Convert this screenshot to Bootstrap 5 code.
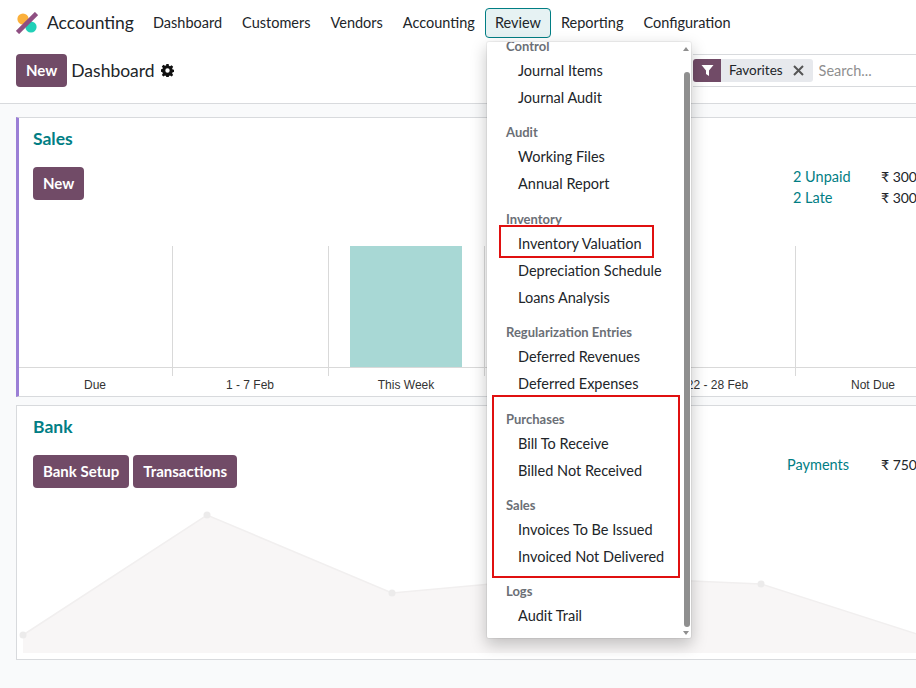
<!DOCTYPE html>
<html lang="en">
<head>
    <meta charset="UTF-8">
    <title>Accounting Dashboard</title>
    <link href="https://cdn.jsdelivr.net/npm/bootstrap@5.3.2/dist/css/bootstrap.min.css" rel="stylesheet">
    <style>
        html, body { height: 688px; overflow: hidden; }
        body { background: #f9fafb; font-family: Lato, "Noto Sans", sans-serif; font-size: 14.5px; color: #212529; position: relative; }
        .top-bar { height: 46px; background: #fff; padding-left: 16px; }
        .app-name { font-size: 17.5px; margin: 0 9px 0 9px; color: #212529; }
        .top-link { padding: 3px 9px; border: 1px solid transparent; border-radius: 4px; color: #212529; text-decoration: none; }
        .top-link.is-open { background: #e6f2f3; border-color: #017e84; }
        .ctrl-bar { height: 58px; background: #fff; border-bottom: 1px solid #d8dadd; padding: 8px 0 0 16px; }
        .odoo-btn { background: #714b67; color: #fff; font-weight: 700; font-size: 15px; border: 0; border-radius: 4px; padding: 0 10px; height: 33px; }
        .odoo-btn:hover { background: #714b67; color: #fff; }
        .crumb { font-size: 17.5px; margin-left: 4px; line-height: 34px; }
        .gear-icon { margin: 10px 0 0 6px; }
        .search-wrap { width: 223px; height: 33px; border-top: 1px solid #d8dadd; border-bottom: 1px solid #d8dadd; }
        .search-icon { width: 28px; height: 23px; background: #714b67; border-radius: 3px 0 0 3px; }
        .search-tag { height: 23px; background: #e7e9ed; padding: 0 9px 0 8px; border-radius: 0 3px 3px 0; font-size: 13.5px; gap: 10px; }
        .search-ph { color: #8f8f8f; margin-left: 6px; }
        .kanban-box { background: #fff; border: 1px solid #d8dadd; margin: 0 -2px 0 16px; }
        .sales-box { height: 280px; margin-top: 13px; border-left: 3px solid #9b7fd6; }
        .bank-box { height: 255px; margin-top: 8px; }
        .box-top { padding: 7px 0 0 14px; height: 128px; }
        .bank-box .box-top { padding-left: 16px; height: 100px; }
        .box-title { color: #017e84; font-size: 17.5px; font-weight: 700; line-height: 27px; margin-bottom: 15px; }
        .stat-col { width: 124px; padding-top: 41px; line-height: 21px; white-space: nowrap; }
        .bank-box .stat-col { width: 130px; }
        .stat-link { color: #017e84; width: 88px; }
        .bank-box .stat-link { width: 94px; }
        .stat-amount { font-size: 14px; }
        .plot { display: block; }
        .tick { font-family: "Liberation Sans", sans-serif; font-size: 12px; fill: #333; text-anchor: middle; }
        .review-menu.dropdown-menu { left: 486px; top: 41px; width: 206px; height: 598px; padding: 0; border-radius: 3px; box-shadow: 0 6px 16px rgba(0,0,0,.22); border: 1px solid rgba(0,0,0,.05); overflow: hidden; font-size: 14.5px; }
        .review-menu .dropdown-header { padding: 0 0 0 19px; margin: 13.4px 0 3px; color: #6b6f76; font-weight: 700; font-size: 13px; line-height: 16px; }
        .review-menu .dropdown-header:first-of-type { margin-top: -4px; }
        .review-menu .dropdown-item { padding: 0 0 0 31px; line-height: 27px; color: #212529; }
        .menu-track { position: absolute; right: 1px; top: 30px; width: 6px; height: 555px; background: #8f8f8f; border-radius: 3px; }
        .menu-arrow { position: absolute; right: 2px; width: 0; height: 0; border-left: 3px solid transparent; border-right: 3px solid transparent; }
        .arrow-up { top: 5px; border-bottom: 4px solid #8f8f8f; }
        .arrow-down { bottom: 3px; border-top: 4px solid #8f8f8f; }
        .red-mark { position: absolute; border: 2px solid #e01010; z-index: 1001; }
        .mark-valuation { left: 499px; top: 225px; width: 155px; height: 33px; }
        .mark-reports { left: 492px; top: 395px; width: 188px; height: 183px; }
    </style>
</head>
<body>
    <div class="top-bar d-flex align-items-center">
        <svg width="22" height="22" viewBox="0 0 22 22">
            <circle cx="7" cy="7" r="5.6" fill="#fbb03b"/>
            <circle cx="15" cy="15" r="5.6" fill="#21d0b8"/>
            <path d="M20.5 1.5 L1.5 20.5" stroke="#8f4f82" stroke-width="4.5" fill="none"/>
        </svg>
        <span class="app-name">Accounting</span>
        <a class="top-link" href="#">Dashboard</a>
        <a class="top-link" href="#">Customers</a>
        <a class="top-link" href="#">Vendors</a>
        <a class="top-link" href="#">Accounting</a>
        <a class="top-link is-open" href="#">Review</a>
        <a class="top-link" href="#">Reporting</a>
        <a class="top-link" href="#">Configuration</a>
    </div>
    <div class="ctrl-bar d-flex align-items-start">
        <button class="btn odoo-btn">New</button>
        <span class="crumb">Dashboard</span>
        <svg class="gear-icon" width="13" height="13" viewBox="0 0 16 16"><path fill-rule="evenodd" fill="#111" d="M6.6 0h2.8l.4 2.2 1.3.6 1.9-1.3 2 2-1.3 1.9.6 1.3 2.2.4v2.8l-2.2.4-.6 1.3 1.3 1.9-2 2-1.9-1.3-1.3.6-.4 2.2H6.6l-.4-2.2-1.3-.6-1.9 1.3-2-2 1.3-1.9-.6-1.3L-.5 9.4V6.6l2.2-.4.6-1.3L1 3l2-2 1.9 1.3 1.3-.6zM8 5.3a2.7 2.7 0 1 0 0 5.4 2.7 2.7 0 0 0 0-5.4z"/></svg>
        <div class="search-wrap d-flex align-items-center ms-auto">
            <span class="search-icon d-flex align-items-center justify-content-center">
                <svg width="13" height="13" viewBox="0 0 13 13"><path fill="#fff" d="M0.5 1h12L8 6.5V12L5 10V6.5z"/></svg>
            </span>
            <span class="search-tag d-flex align-items-center">Favorites
                <svg width="11" height="11" viewBox="0 0 11 11"><path stroke="#555" stroke-width="2" d="M1 1l9 9M10 1l-9 9"/></svg>
            </span>
            <span class="search-ph">Search...</span>
        </div>
    </div>

    <div class="kanban-box sales-box">
        <div class="box-top d-flex justify-content-between">
            <div>
                <div class="box-title">Sales</div>
                <button class="btn odoo-btn">New</button>
            </div>
            <div class="stat-col">
                <div class="d-flex"><span class="stat-link">2 Unpaid</span><span class="stat-amount">₹ 300</span></div>
                <div class="d-flex"><span class="stat-link">2 Late</span><span class="stat-amount">₹ 300</span></div>
            </div>
        </div>
        <svg class="plot" width="898" height="150" viewBox="0 128 898 150">
            <g stroke="#d9d9d9" fill="none">
                <path d="M0 249.5H898"/>
                <path d="M153.5 128V258M309.5 128V258M465.5 128V258M621.5 128V258M776.5 128V258"/>
            </g>
            <rect x="331" y="128" width="112" height="121" fill="#a8d8d5"/>
            <text class="tick" x="76" y="271">Due</text>
            <text class="tick" x="231" y="271">1 - 7 Feb</text>
            <text class="tick" x="387" y="271">This Week</text>
            <text class="tick" x="698.5" y="271">22 - 28 Feb</text>
            <text class="tick" x="854" y="271">Not Due</text>
        </svg>
    </div>

    <div class="kanban-box bank-box">
        <div class="box-top d-flex justify-content-between">
            <div>
                <div class="box-title">Bank</div>
                <div class="d-flex gap-1">
                    <button class="btn odoo-btn">Bank Setup</button>
                    <button class="btn odoo-btn">Transactions</button>
                </div>
            </div>
            <div class="stat-col">
                <div class="d-flex"><span class="stat-link">Payments</span><span class="stat-amount">₹ 750</span></div>
            </div>
        </div>
        <svg class="plot" width="900" height="153" viewBox="0 100 900 153">
            <path d="M6 229L190 109L375 187L560 170L744 178L900 228V247H6Z" fill="#f8f6f6"/>
            <path d="M6 229L190 109L375 187L560 170L744 178L900 228" fill="none" stroke="#f1efef" stroke-width="1.5"/>
            <g fill="#ecebeb"><circle cx="6" cy="229" r="3.5"/><circle cx="190" cy="109" r="3.5"/><circle cx="375" cy="187" r="3.5"/><circle cx="744" cy="178" r="3.5"/></g>
        </svg>
    </div>

    <div class="review-menu dropdown-menu show">
        <span class="menu-arrow arrow-up"></span>
        <h6 class="dropdown-header">Control</h6>
        <a class="dropdown-item" href="#">Journal Items</a>
        <a class="dropdown-item" href="#">Journal Audit</a>
        <h6 class="dropdown-header">Audit</h6>
        <a class="dropdown-item" href="#">Working Files</a>
        <a class="dropdown-item" href="#">Annual Report</a>
        <h6 class="dropdown-header">Inventory</h6>
        <a class="dropdown-item" href="#">Inventory Valuation</a>
        <a class="dropdown-item" href="#">Depreciation Schedule</a>
        <a class="dropdown-item" href="#">Loans Analysis</a>
        <h6 class="dropdown-header">Regularization Entries</h6>
        <a class="dropdown-item" href="#">Deferred Revenues</a>
        <a class="dropdown-item" href="#">Deferred Expenses</a>
        <h6 class="dropdown-header">Purchases</h6>
        <a class="dropdown-item" href="#">Bill To Receive</a>
        <a class="dropdown-item" href="#">Billed Not Received</a>
        <h6 class="dropdown-header">Sales</h6>
        <a class="dropdown-item" href="#">Invoices To Be Issued</a>
        <a class="dropdown-item" href="#">Invoiced Not Delivered</a>
        <h6 class="dropdown-header">Logs</h6>
        <a class="dropdown-item" href="#">Audit Trail</a>
        <span class="menu-track"></span>
        <span class="menu-arrow arrow-down"></span>
    </div>
    <div class="red-mark mark-valuation"></div>
    <div class="red-mark mark-reports"></div>
    <script src="https://cdn.jsdelivr.net/npm/bootstrap@5.3.2/dist/js/bootstrap.bundle.min.js"></script>
</body>
</html>
